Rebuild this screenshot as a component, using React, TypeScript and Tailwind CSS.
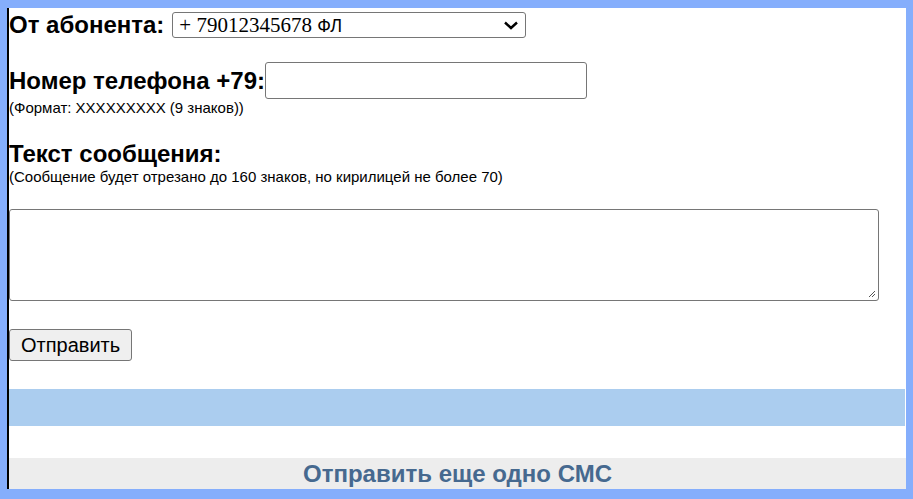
export default function App() {
  return (
    <div className="min-h-[499px] bg-[#85aefc] pt-2 pl-[7px] pr-[7px] pb-[10px] font-['Liberation_Sans',Arial,sans-serif] text-black">
      <div className="h-[481px] bg-white border-l-2 border-black flex flex-col">
        <div className="flex items-center h-[28px] mt-[3px]">
          <span className="text-[24px] font-bold leading-none">От абонента:</span>
          <div className="ml-[8px] w-[354px] h-[26px] border border-[#767676] rounded-[3px] flex items-center justify-between pl-[6px] pr-[6px]">
            <span className="text-[21px] font-['Liberation_Serif',serif] leading-none">
              + 79012345678 <span className="font-['Liberation_Sans',sans-serif] text-[18px]">ФЛ</span>
            </span>
            <svg width="16" height="10" viewBox="0 0 16 10" fill="none">
              <path d="M2 2.5 L8 8 L14 2.5" stroke="black" strokeWidth="2.4" />
            </svg>
          </div>
        </div>

        <div className="flex items-center mt-[23px]">
          <span className="text-[24px] font-bold leading-none">Номер телефона +79:</span>
          <div className="w-[322px] h-[37px] border border-[#767676] rounded-[3px]" />
        </div>
        <div className="text-[15px] leading-[17px]">(Формат: XXXXXXXXX (9 знаков))</div>

        <div className="text-[24px] font-bold leading-[28px] mt-[24px]">Текст сообщения:</div>
        <div className="text-[15px] leading-[17px]">(Сообщение будет отрезано до 160 знаков, но кирилицей не более 70)</div>

        <div className="relative w-[870px] h-[92px] border border-[#767676] rounded-[3px] mt-[24px]">
          <svg className="absolute right-[2px] bottom-[2px]" width="9" height="9" viewBox="0 0 9 9">
            <path d="M8 2 L2 8 M8 5 L5 8" stroke="#555" strokeWidth="1" />
          </svg>
        </div>

        <div className="mt-[28px]">
          <button className="h-[32px] px-[11px] bg-[#efefef] border border-[#767676] rounded-[3px] text-[20px] leading-none">Отправить</button>
        </div>

        <div className="mt-[28px] h-[37px] bg-[#abcdef] mr-[1px]" />

        <div className="mt-auto h-[31px] bg-[#ededed] flex items-center justify-center">
          <span className="text-[24px] font-bold text-[#46698f] leading-none">Отправить еще одно СМС</span>
        </div>
      </div>
    </div>
  )
}
